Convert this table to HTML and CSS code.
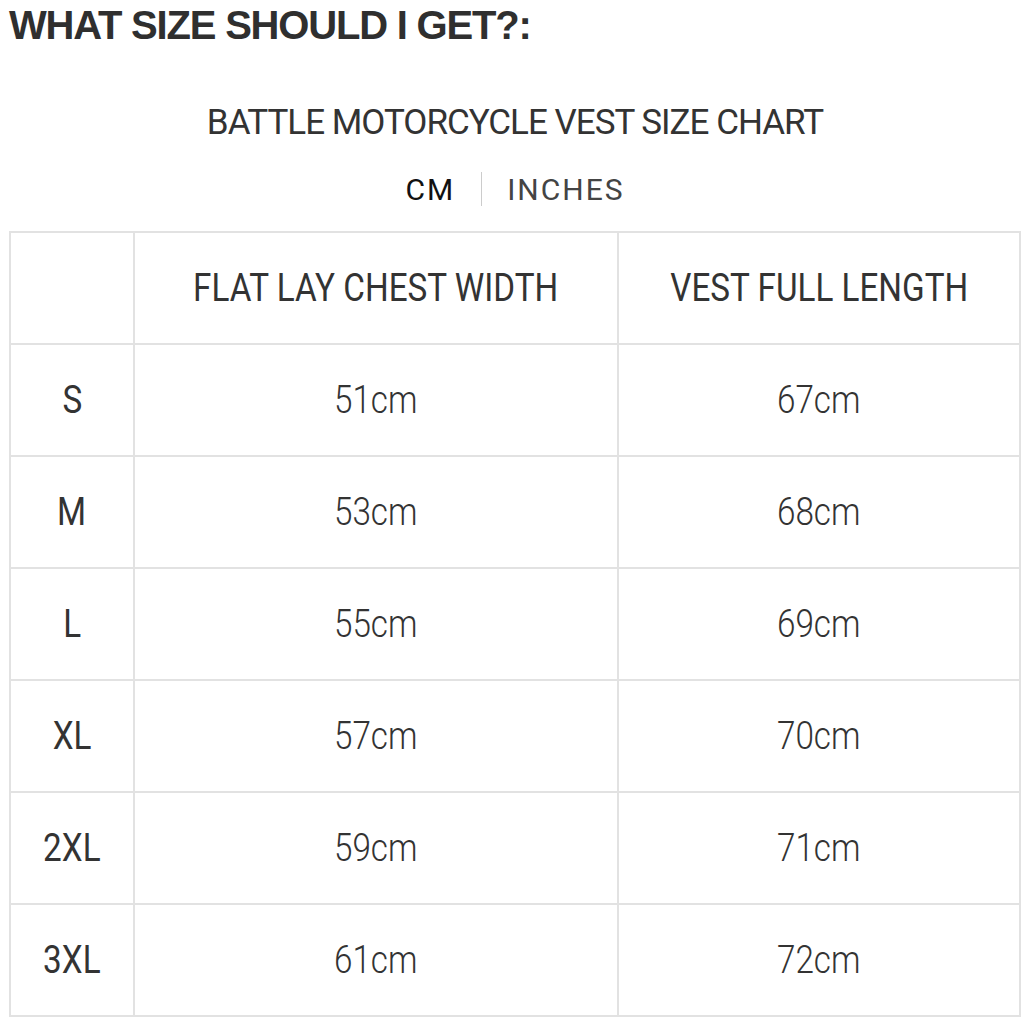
FILE: index.html
```html
<!DOCTYPE html>
<html>
<head>
<meta charset="utf-8">
<link rel="stylesheet" href="styles.css">
</head>
<body>
<h2 class="title">WHAT SIZE SHOULD I GET?:</h2>
<div class="chart">
  <div class="chart-name">BATTLE MOTORCYCLE VEST SIZE CHART</div>
  <div class="units"><span class="unit active">CM</span><span class="sep"></span><span class="unit">INCHES</span></div>
  <table class="size-table">
    <tr class="head"><th></th><th><span class="t">FLAT LAY CHEST WIDTH</span></th><th><span class="t">VEST FULL LENGTH</span></th></tr>
    <tr><td class="size"><span class="t">S</span></td><td><span class="t">51cm</span></td><td><span class="t">67cm</span></td></tr>
    <tr><td class="size"><span class="t">M</span></td><td><span class="t">53cm</span></td><td><span class="t">68cm</span></td></tr>
    <tr><td class="size"><span class="t">L</span></td><td><span class="t">55cm</span></td><td><span class="t">69cm</span></td></tr>
    <tr><td class="size"><span class="t">XL</span></td><td><span class="t">57cm</span></td><td><span class="t">70cm</span></td></tr>
    <tr><td class="size"><span class="t">2XL</span></td><td><span class="t">59cm</span></td><td><span class="t">71cm</span></td></tr>
    <tr><td class="size"><span class="t">3XL</span></td><td><span class="t">61cm</span></td><td><span class="t">72cm</span></td></tr>
  </table>
</div>
</body>
</html>
```
FILE: styles.css
```css
html, body { margin: 0; padding: 0; background: #fff; }
body { padding: 0 3px 0 9px; }
.title {
  font-family: "Liberation Sans", Arial, sans-serif;
  font-weight: bold;
  font-size: 40px;
  letter-spacing: -1.2px;
  color: #2f2f2f;
  margin: 0;
  padding-top: 5px;
  line-height: 40px;
}
.chart { font-family: Roboto, sans-serif; color: #333; }
.chart-name {
  text-align: center;
  font-size: 35px;
  line-height: 40px;
  margin-top: 58px;
  letter-spacing: -1px;
}
.units {
  display: flex;
  justify-content: center;
  align-items: center;
  margin-top: 28px;
  height: 36px;
  font-size: 30px;
  letter-spacing: 2px;
}
.unit { color: #444; }
.unit.active { color: #111; }
.sep { width: 1px; height: 34px; background: #ccc; margin: 0 25px 0 26px; }
.size-table {
  margin-top: 24px;
  width: 1012px;
  border-collapse: collapse;
  border: 2px solid #e2e2e2;
}
.size-table th, .size-table td {
  border: 2px solid #e2e2e2;
  text-align: center;
  height: 110px;
  padding: 0;
  font-size: 38px;
  color: #333;
}
.t { display: inline-block; transform: scaleX(0.875); white-space: nowrap; }
.size-table th { font-weight: normal; }
.size-table th:first-child, .size-table td.size { width: 122px; }
.size-table th:nth-child(2) { width: 482px; }
.size-table td { font-weight: 300; }
.size-table td.size { font-weight: normal; }
```
